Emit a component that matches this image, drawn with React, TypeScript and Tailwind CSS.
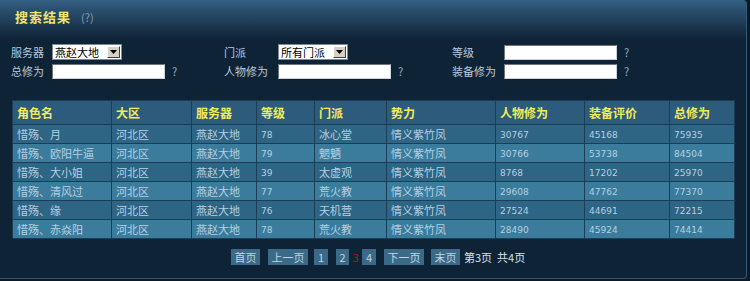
import React from 'react';

const rows = [
  ['惜殇、月', '河北区', '燕赵大地', '78', '冰心堂', '情义紫竹凤', '30767', '45168', '75935'],
  ['惜殇、欧阳牛逼', '河北区', '燕赵大地', '79', '魍魉', '情义紫竹凤', '30766', '53738', '84504'],
  ['惜殇、大小姐', '河北区', '燕赵大地', '39', '太虚观', '情义紫竹凤', '8768', '17202', '25970'],
  ['惜殇、清风过', '河北区', '燕赵大地', '77', '荒火教', '情义紫竹凤', '29608', '47762', '77370'],
  ['惜殇、缘', '河北区', '燕赵大地', '76', '天机营', '情义紫竹凤', '27524', '44691', '72215'],
  ['惜殇、赤焱阳', '河北区', '燕赵大地', '78', '荒火教', '情义紫竹凤', '28490', '45924', '74414'],
];

const headers = ['角色名', '大区', '服务器', '等级', '门派', '势力', '人物修为', '装备评价', '总修为'];
const widths = ['w-[99px]', 'w-[80px]', 'w-[65px]', 'w-[58px]', 'w-[72px]', 'w-[109px]', 'w-[89px]', 'w-[85px]', 'w-[65px]'];
const numCols = [3, 6, 7, 8];

const font = { fontFamily: '"Noto Sans CJK SC", "DejaVu Sans", sans-serif' };

function Select({ value }: { value: string }) {
  return (
    <div className="flex items-center w-[70px] h-[16px] bg-white border border-[#7a8a99] pl-[2px] pr-[1px]">
      <span className="flex-1 text-[11px] leading-none text-black">{value}</span>
      <span className="w-[13px] h-[12px] bg-[#d4d0c8] border border-t-white border-l-white border-r-[#404040] border-b-[#404040] flex items-center justify-center">
        <svg width="7" height="4" viewBox="0 0 7 4"><path d="M0 0h7L3.5 4z" fill="#000" /></svg>
      </span>
    </div>
  );
}

function Input() {
  return <div className="w-[113px] h-[15px] bg-white border border-t-[#6e7780] border-l-[#6e7780] border-r-[#c9d2da] border-b-[#c9d2da]" />;
}

function Q() {
  return <span className="text-[11px] text-[#8fb0c8] ml-[7px]">?</span>;
}

function PageBtn({ children, w }: { children: React.ReactNode; w: string }) {
  return (
    <span className={`${w} h-[16px] bg-[#3a6a88] text-[#bcd6e6] text-[11px] leading-[16px] text-center`}>{children}</span>
  );
}

export default function App() {
  return (
    <div className="w-[750px] h-[281px] bg-[#0c1a28]" style={font}>
      <div className="w-[747px] h-[279px] bg-[#0f2337] border-r border-b border-[#355a75] rounded-br-[4px] rounded-tr-[4px] relative overflow-hidden">
        <div className="absolute inset-x-0 top-0 h-[40px] bg-gradient-to-b from-[#345f82] to-[#0f2337]" />
        <div className="relative">
          {/* Title */}
          <div className="flex items-center h-[34px] pl-[15px] gap-[10px]">
            <span className="text-[13px] font-bold text-[#f2e56c] tracking-[1px]">搜索结果</span>
            <span className="text-[11px] text-[#7f9fbb]">(?)</span>
          </div>

          {/* Form */}
          <div className="flex flex-col gap-[3px] mt-[10px] text-[11px] text-[#b6cadb]">
            <div className="flex items-center h-[16px]">
              <div className="flex items-center w-[224px] pl-[11px]">
                <span className="w-[41px]">服务器</span>
                <Select value="燕赵大地" />
              </div>
              <div className="flex items-center w-[228px]">
                <span className="w-[54px]">门派</span>
                <Select value="所有门派" />
              </div>
              <div className="flex items-center">
                <span className="w-[52px]">等级</span>
                <Input />
                <Q />
              </div>
            </div>
            <div className="flex items-center h-[16px]">
              <div className="flex items-center w-[224px] pl-[11px]">
                <span className="w-[41px]">总修为</span>
                <Input />
                <Q />
              </div>
              <div className="flex items-center w-[228px]">
                <span className="w-[54px]">人物修为</span>
                <Input />
                <Q />
              </div>
              <div className="flex items-center">
                <span className="w-[52px]">装备修为</span>
                <Input />
                <Q />
              </div>
            </div>
          </div>

          {/* Table */}
          <table className="ml-[12px] mt-[21px] border-collapse table-fixed w-[723px]">
            <thead>
              <tr className="h-[24px] bg-[#2c5b7b]">
                {headers.map((h, i) => (
                  <th key={h} className={`${widths[i]} border border-[#1c3d56] text-left pl-[4px] text-[12px] font-bold text-[#f0ec5a]`}>
                    {h}
                  </th>
                ))}
              </tr>
            </thead>
            <tbody>
              {rows.map((r, ri) => (
                <tr key={ri} className={`h-[19px] ${ri % 2 === 0 ? 'bg-[#2e6484]' : 'bg-[#3b7c9c]'}`}>
                  {r.map((c, ci) => (
                    <td
                      key={ci}
                      className={`border border-[#1c3d56] pl-[4px] text-[#b5d0e2] leading-none ${
                        numCols.includes(ci) ? 'text-[9px] pt-[2px]' : 'text-[11px]'
                      }`}
                      style={numCols.includes(ci) ? { fontFamily: '"DejaVu Sans", sans-serif' } : undefined}
                    >
                      {c}
                    </td>
                  ))}
                </tr>
              ))}
            </tbody>
          </table>

          {/* Pagination */}
          <div className="flex items-center pl-[231px] mt-[10px] h-[16px] text-[11px]">
            <PageBtn w="w-[29px]">首页</PageBtn>
            <span className="w-[8px]" />
            <PageBtn w="w-[40px]">上一页</PageBtn>
            <span className="w-[6px]" />
            <PageBtn w="w-[14px]">1</PageBtn>
            <span className="w-[8px]" />
            <PageBtn w="w-[13px]">2</PageBtn>
            <span className="w-[13px] text-center text-[#a8181f]">3</span>
            <PageBtn w="w-[14px]">4</PageBtn>
            <span className="w-[8px]" />
            <PageBtn w="w-[40px]">下一页</PageBtn>
            <span className="w-[7px]" />
            <PageBtn w="w-[29px]">末页</PageBtn>
            <span className="ml-[4px] text-[#d6e2ea]">第3页&nbsp;&nbsp;共4页</span>
          </div>
        </div>
      </div>
    </div>
  );
}
